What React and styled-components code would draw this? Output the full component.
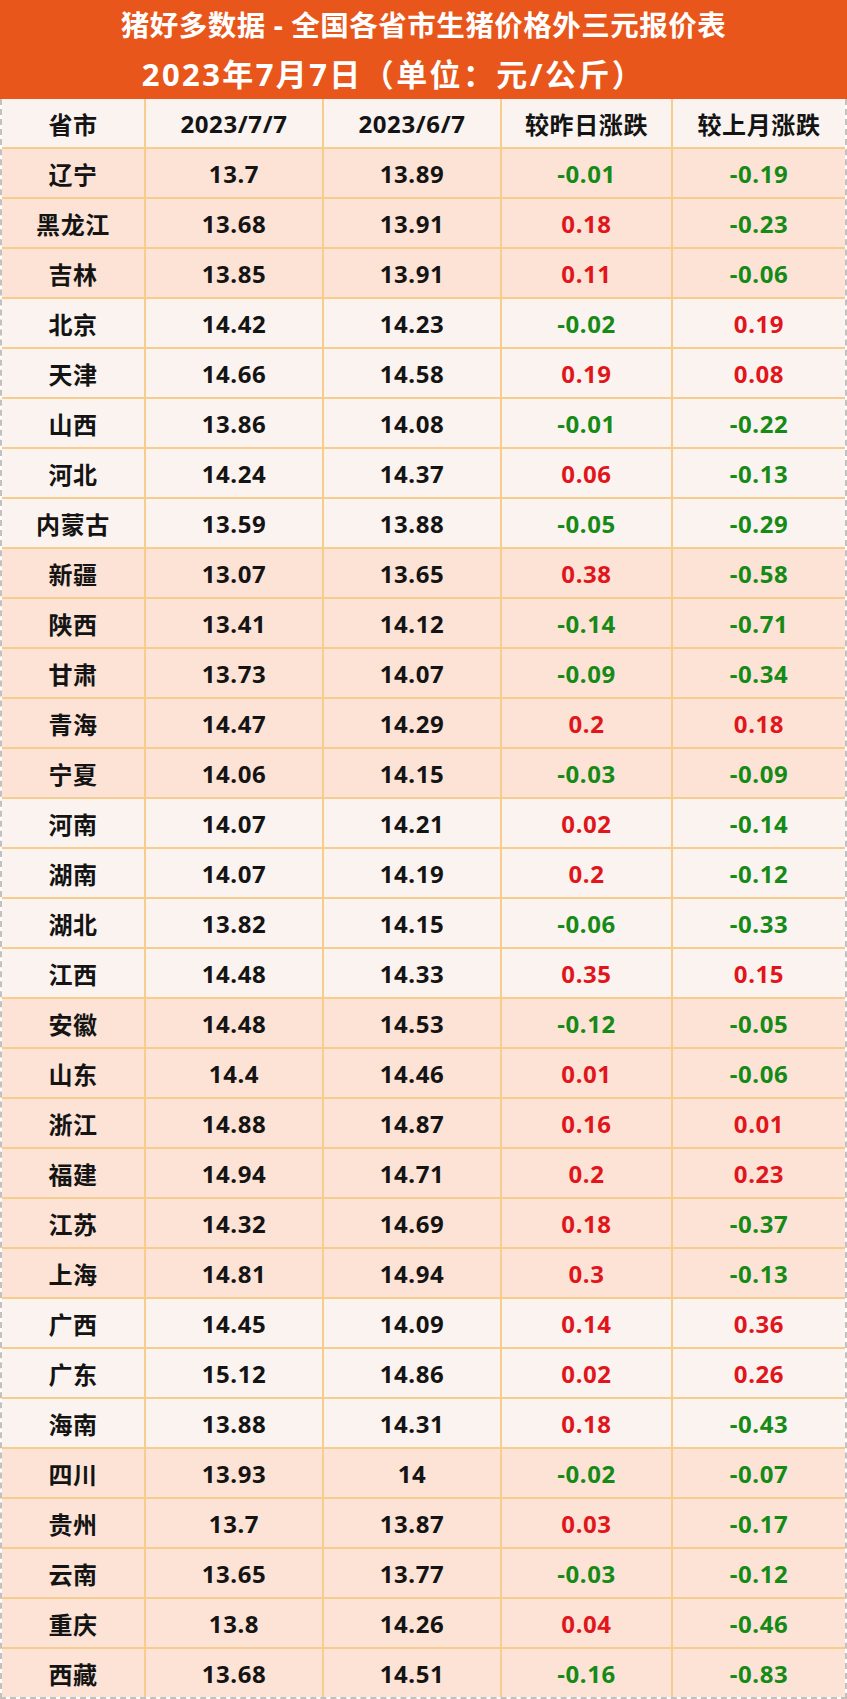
import React from 'react';
import styled, { createGlobalStyle } from 'styled-components';

const GlobalStyle = createGlobalStyle`
    * { box-sizing: border-box; }
    body {
        margin: 0;
        background: #ffffff;
        font-family: "Noto Sans", "Noto Sans CJK SC", sans-serif;
    }
`;

const COLUMNS = '144px 178px 178px 171px 1fr';

// region groups alternate between peach and pale rows
const GROUPS = [
    { tone: 'peach', rows: [
        ['辽宁', '13.7', '13.89', '-0.01', '-0.19'],
        ['黑龙江', '13.68', '13.91', '0.18', '-0.23'],
        ['吉林', '13.85', '13.91', '0.11', '-0.06'],
    ] },
    { tone: 'pale', rows: [
        ['北京', '14.42', '14.23', '-0.02', '0.19'],
        ['天津', '14.66', '14.58', '0.19', '0.08'],
        ['山西', '13.86', '14.08', '-0.01', '-0.22'],
        ['河北', '14.24', '14.37', '0.06', '-0.13'],
        ['内蒙古', '13.59', '13.88', '-0.05', '-0.29'],
    ] },
    { tone: 'peach', rows: [
        ['新疆', '13.07', '13.65', '0.38', '-0.58'],
        ['陕西', '13.41', '14.12', '-0.14', '-0.71'],
        ['甘肃', '13.73', '14.07', '-0.09', '-0.34'],
        ['青海', '14.47', '14.29', '0.2', '0.18'],
        ['宁夏', '14.06', '14.15', '-0.03', '-0.09'],
    ] },
    { tone: 'pale', rows: [
        ['河南', '14.07', '14.21', '0.02', '-0.14'],
        ['湖南', '14.07', '14.19', '0.2', '-0.12'],
        ['湖北', '13.82', '14.15', '-0.06', '-0.33'],
        ['江西', '14.48', '14.33', '0.35', '0.15'],
    ] },
    { tone: 'peach', rows: [
        ['安徽', '14.48', '14.53', '-0.12', '-0.05'],
        ['山东', '14.4', '14.46', '0.01', '-0.06'],
        ['浙江', '14.88', '14.87', '0.16', '0.01'],
        ['福建', '14.94', '14.71', '0.2', '0.23'],
        ['江苏', '14.32', '14.69', '0.18', '-0.37'],
        ['上海', '14.81', '14.94', '0.3', '-0.13'],
    ] },
    { tone: 'pale', rows: [
        ['广西', '14.45', '14.09', '0.14', '0.36'],
        ['广东', '15.12', '14.86', '0.02', '0.26'],
        ['海南', '13.88', '14.31', '0.18', '-0.43'],
    ] },
    { tone: 'peach', rows: [
        ['四川', '13.93', '14', '-0.02', '-0.07'],
        ['贵州', '13.7', '13.87', '0.03', '-0.17'],
        ['云南', '13.65', '13.77', '-0.03', '-0.12'],
        ['重庆', '13.8', '14.26', '0.04', '-0.46'],
        ['西藏', '13.68', '14.51', '-0.16', '-0.83'],
    ] },
];

const HEADERS = ['省市', '2023/7/7', '2023/6/7', '较昨日涨跌', '较上月涨跌'];

const changeColor = (v) => (v.startsWith('-') ? 'down' : 'up');

const App = () => (
    <>
        <GlobalStyle />
        <Page>
            <Banner>
                <TitleLine>猪好多数据 - 全国各省市生猪价格外三元报价表</TitleLine>
                <TitleLine $sub>2023年7月7日（单位：元/公斤）</TitleLine>
            </Banner>
            <Table>
                <Row $tone="head">
                    {HEADERS.map((h) => <Cell key={h}>{h}</Cell>)}
                </Row>
                {GROUPS.flatMap((g) => g.rows.map((r) => (
                    <Row key={r[0]} $tone={g.tone}>
                        <Cell>{r[0]}</Cell>
                        <Cell>{r[1]}</Cell>
                        <Cell>{r[2]}</Cell>
                        <Cell $trend={changeColor(r[3])}>{r[3]}</Cell>
                        <Cell $trend={changeColor(r[4])}>{r[4]}</Cell>
                    </Row>
                )))}
            </Table>
        </Page>
    </>
);

export default App;

const Page = styled.div`
    width: 847px;
`;

const Banner = styled.header`
    height: 99px;
    background: #e8561b;
    display: flex;
    flex-direction: column;
    justify-content: center;
    align-items: center;
`;

const TitleLine = styled.div`
    height: 49px;
    line-height: 49px;
    color: #ffffff;
    font-family: "Noto Sans", "Noto Sans CJK SC", sans-serif;
    font-size: ${(p) => (p.$sub ? '31px' : '28.5px')};
    font-weight: 700;
    letter-spacing: ${(p) => (p.$sub ? '2.4px' : '0.5px')};
    padding-right: ${(p) => (p.$sub ? '60px' : '0')};
    white-space: nowrap;
`;

const Table = styled.div`
    border: 2px dashed #c4c0bd;
    border-top: none;
`;

const TONES = {
    head: '#faf3ef',
    peach: '#fce3d6',
    pale: '#fbf3ef',
};

const Row = styled.div`
    display: grid;
    grid-template-columns: ${COLUMNS};
    height: 50px;
    background: ${(p) => TONES[p.$tone]};
    border-bottom: 2px solid #f7cd8e;

    &:last-child {
        border-bottom: none;
        height: 48px;
    }
`;

const TREND = {
    up: '#e0161c',
    down: '#168a17',
};

const Cell = styled.div`
    display: flex;
    align-items: center;
    justify-content: center;
    border-right: 2px solid #f7cd8e;
    color: ${(p) => (p.$trend ? TREND[p.$trend] : '#141414')};
    font-family: "Noto Sans", "Noto Sans CJK SC", sans-serif;
    font-size: 24px;
    font-weight: 700;
    letter-spacing: 0.6px;
    white-space: nowrap;

    &:last-child {
        border-right: none;
    }
`;
